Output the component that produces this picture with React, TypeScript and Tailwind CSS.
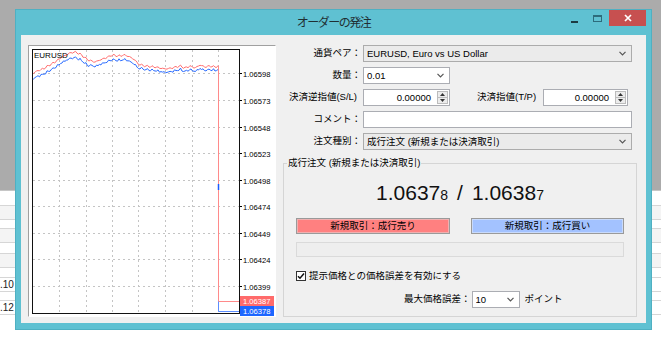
import React from "react";

// chart box inner origin, in page pixels
const OX = 29;
const OY = 46;

const ASK_KEYS: [number, number][] = [
  [32, 74], [37, 71], [43, 69], [48, 66], [55, 62], [62, 57], [70, 53], [75, 52],
  [80, 54], [88, 60], [95, 62], [100, 60], [108, 57], [112, 55], [118, 56], [125, 55],
  [130, 57], [135, 60], [138, 64], [145, 66], [155, 67], [165, 69], [172, 68], [180, 66],
  [185, 68], [190, 66], [195, 68], [200, 65], [205, 67], [210, 66], [215, 67], [218, 66],
];

function lerp(keys: [number, number][], x: number) {
  for (let i = 1; i < keys.length; i++) {
    if (x <= keys[i][0]) {
      const [x0, y0] = keys[i - 1];
      const [x1, y1] = keys[i];
      return y0 + ((y1 - y0) * (x - x0)) / (x1 - x0);
    }
  }
  return keys[keys.length - 1][1];
}

const askPts: string[] = [];
const bidPts: string[] = [];
for (let i = 0, x = 32; x <= 218; i++, x += 1.5) {
  const wob = Math.sin(i * 1.7) * 0.7 + Math.sin(i * 4.3) * 0.4;
  const a = lerp(ASK_KEYS, x) + wob;
  const spread = x < 90 ? 5.5 : x < 140 ? 4.5 : 3.5;
  const b = a + spread + Math.sin(i * 2.9) * 0.5;
  askPts.push(`${(x - OX).toFixed(1)},${(a - OY).toFixed(1)}`);
  bidPts.push(`${(x - OX).toFixed(1)},${(b - OY).toFixed(1)}`);
}

const GRID_X = [59, 86, 112, 138, 165, 192, 218].map((x) => x - OX + 0.5);
const GRID_Y = [73, 100, 127, 153, 180, 206, 233, 259, 286].map((y) => y - OY + 0.5);
const PRICES = ["1.06598", "1.06573", "1.06548", "1.06523", "1.06498", "1.06474", "1.06449", "1.06424", "1.06399"];

function Chart() {
  return (
    <div className="h-[272px] w-[248px] shrink-0 border border-t-[#a0a0a0] border-l-[#a0a0a0] border-r-white border-b-white bg-white">
      <svg width={246} height={270} className="block">
        {GRID_X.map((x) => (
          <line key={x} x1={x} x2={x} y1={4} y2={267} stroke="#c4c4c4" strokeDasharray="2 3" />
        ))}
        {GRID_Y.map((y, i) => (
          <g key={y}>
            <line x1={4} x2={210} y1={y} y2={y} stroke="#c4c4c4" strokeDasharray="2 3" />
            <line x1={210} x2={213} y1={y} y2={y} stroke="#000" />
            <text x={214} y={y + 3} fontSize={7.6} fill="#000" fontFamily="Liberation Sans, sans-serif">
              {PRICES[i]}
            </text>
          </g>
        ))}
        <polyline points={askPts.join(" ")} fill="none" stroke="#ff6f6f" strokeWidth={1} />
        <polyline points={bidPts.join(" ")} fill="none" stroke="#2a6cff" strokeWidth={1} />
        <path d="M189.5 20 V255.5 H210" fill="none" stroke="#ff8a8a" />
        <path d="M189.5 255.5 V265.5 H210" fill="none" stroke="#5b8dff" />
        <path d="M189.5 138 V144" stroke="#1a5cff" strokeWidth={1.5} />
        <rect x={3.5} y={3.5} width={207} height={264} fill="none" stroke="#111" />
        <text x={5} y={12} fontSize={8} fill="#000" fontFamily="Liberation Sans, sans-serif">
          EURUSD
        </text>
        <rect x={211} y={250} width={34} height={10} fill="#ff6b6b" />
        <text x={214} y={258} fontSize={7.6} fill="#fff" fontFamily="Liberation Sans, sans-serif">
          1.06387
        </text>
        <rect x={211} y={260} width={34} height={10} fill="#1d66ff" />
        <text x={214} y={268} fontSize={7.6} fill="#fff" fontFamily="Liberation Sans, sans-serif">
          1.06378
        </text>
      </svg>
    </div>
  );
}

function Chevron() {
  return (
    <svg width="7" height="5" viewBox="0 0 7 5" className="shrink-0">
      <path d="M0.5 0.8 L3.5 3.8 L6.5 0.8" fill="none" stroke="#555" strokeWidth="1.2" />
    </svg>
  );
}

function Tri({ up }: { up?: boolean }) {
  return (
    <svg width="5" height="3" viewBox="0 0 5 3">
      <path d={up ? "M0 3 L2.5 0 L5 3 Z" : "M0 0 L2.5 3 L5 0 Z"} fill="#333" />
    </svg>
  );
}

function Combo({ value, className, gray }: { value: string; className: string; gray?: boolean }) {
  return (
    <div
      className={`flex h-[17px] items-center border pl-[3px] pr-[5px] ${
        gray ? "border-[#acacac] bg-[#ebebeb]" : "border-[#abadb3] bg-white"
      } ${className}`}
    >
      <span className="flex-1 truncate leading-[15px]">{value}</span>
      <Chevron />
    </div>
  );
}

function Spin({ className }: { className: string }) {
  return (
    <div className={`flex h-[17px] border border-[#abadb3] bg-white ${className}`}>
      <span className="flex-1 pr-[6px] text-right leading-[15px]">0.00000</span>
      <div className="my-[1px] mr-[1px] flex w-[11px] flex-col border border-[#bcbcbc] bg-[#ececec]">
        <div className="flex flex-1 items-center justify-center border-b border-[#bcbcbc]">
          <Tri up />
        </div>
        <div className="flex flex-1 items-center justify-center">
          <Tri />
        </div>
      </div>
    </div>
  );
}

function Row({ label, children, labelClass = "" }: { label: string; children: React.ReactNode; labelClass?: string }) {
  return (
    <div className="flex h-[17px] items-center">
      <span className={`w-[78px] shrink-0 whitespace-nowrap text-right ${labelClass}`}>{label}</span>
      <div className="ml-[2px] flex items-center">{children}</div>
    </div>
  );
}

function OrderPanel() {
  return (
    <div className="flex w-[354px] flex-col">
      <div className="flex flex-col gap-[5px]">
        <Row label="通貨ペア：">
          <Combo gray className="w-[269px]" value="EURUSD, Euro vs US Dollar" />
        </Row>
        <Row label="数量：">
          <Combo className="w-[87px]" value="0.01" />
        </Row>
        <Row label="決済逆指値(S/L)" labelClass="pr-[4px]">
          <Spin className="w-[87px]" />
          <span className="ml-[27px] w-[60px] whitespace-nowrap">決済指値(T/P)</span>
          <Spin className="ml-[6px] w-[85px]" />
        </Row>
        <Row label="コメント：">
          <div className="h-[17px] w-[269px] border border-[#abadb3] bg-white" />
        </Row>
        <Row label="注文種別：">
          <Combo gray className="w-[269px]" value="成行注文 (新規または決済取引)" />
        </Row>
      </div>

      <fieldset className="mt-[7px] h-[160px] border border-[#d5d5d5] p-0">
        <legend className="ml-[3px] px-[1px] leading-[12px]">成行注文 (新規または決済取引)</legend>
        <div className="px-[12px]">
          <div className="mt-[12px] flex h-[24px] items-baseline justify-center font-['Liberation_Sans',sans-serif] leading-[24px] text-[#111]">
            <span className="text-[21px]">1.0637</span>
            <span className="text-[14px]">8</span>
            <span className="mx-[9px] text-[21px]">/</span>
            <span className="text-[21px]">1.0638</span>
            <span className="text-[14px]">7</span>
          </div>

          <div className="mt-[13px] flex justify-between">
            <div className="flex h-[16px] w-[154px] items-center justify-center border border-[#9a9a9a] bg-[#ff8080] shadow-[inset_0_0_0_1px_#f0b0b0]">
              新規取引：成行売り
            </div>
            <div className="flex h-[16px] w-[153px] items-center justify-center border border-[#9a9a9a] bg-[#a3c2ff] shadow-[inset_0_0_0_1px_#c8dafc]">
              新規取引：成行買い
            </div>
          </div>

          <div className="mt-[8px] h-[15px] border border-[#dadada] bg-[#eeeeee]" />

          <div className="mt-[12px] flex h-[14px] items-center">
            <div className="flex h-[10px] w-[10px] items-center justify-center border border-[#333] bg-white">
              <svg width="8" height="8" viewBox="0 0 8 8">
                <path d="M1 4.2 L3 6.2 L7 1.5" fill="none" stroke="#111" strokeWidth="1.5" />
              </svg>
            </div>
            <span className="ml-[3px]">提示価格との価格誤差を有効にする</span>
          </div>

          <div className="mt-[8px] flex h-[17px] items-center pl-[108px]">
            <span className="whitespace-nowrap">最大価格誤差：</span>
            <Combo className="ml-[1px] w-[48px]" value="10" />
            <span className="ml-[5px] whitespace-nowrap">ポイント</span>
          </div>
        </div>
      </fieldset>
    </div>
  );
}

function TitleBar() {
  return (
    <div className="relative h-[25px] shrink-0">
      <div className="pt-[5px] text-center text-[12px] leading-[16px] tracking-[-1.5px] text-[#1f2f33]">
        オーダーの発注
      </div>
      <div className="absolute right-[5px] top-0 flex items-start">
        <div className="mr-[15px] mt-[11px] h-[2px] w-[7px] bg-[#1c3a42]" />
        <div className="mr-[7px] mt-[5px] h-[7px] w-[9px] border border-t-2 border-[#2d6c7c]" />
        <div className="flex h-[16px] w-[37px] items-center justify-center bg-[#c75050]">
          <svg width="8" height="8" viewBox="0 0 8 8">
            <path d="M1 1 L7 7 M7 1 L1 7" stroke="#fff" strokeWidth="1.7" />
          </svg>
        </div>
      </div>
    </div>
  );
}

function Backdrop() {
  return (
    <div className="flex flex-col">
      <div className="h-[190px] bg-[#ababab]" />
      <div className="border-t border-[#c6c6c6] pt-[14px]">
        <div className="h-[15px] border-y border-[#d6d6d6] bg-[#f4f4f4]" />
        <div className="mt-[8px] h-[15px] border-y border-[#d6d6d6] bg-[#f4f4f4]" />
        <div className="mt-[10px] h-[15px] border-y border-[#d6d6d6] bg-[#f4f4f4]" />
        <div className="mt-[9px] flex h-[15px] border-y border-[#d6d6d6] bg-white">
          <span className="w-[13px] text-right text-[10px] leading-[13px] text-[#222]">.10</span>
        </div>
        <div className="mt-[8px] flex h-[15px] border-y border-[#d6d6d6] bg-white">
          <span className="w-[13px] text-right text-[10px] leading-[13px] text-[#222]">.12</span>
        </div>
      </div>
    </div>
  );
}

export default function App() {
  return (
    <div className="relative h-[347px] w-[661px] overflow-hidden bg-white font-['Liberation_Sans','Noto_Sans_CJK_JP',sans-serif] text-[9.5px] text-black">
      <Backdrop />
      <div className="absolute left-[15px] top-[9px] flex h-[321px] w-[637px] flex-col border border-[#4fb0c2] bg-[#5fc1d2]">
        <TitleBar />
        <div className="mx-[5px] flex h-[288px] gap-[7px] bg-[#f0f0f0] pl-[7px] pt-[10px]">
          <Chart />
          <OrderPanel />
        </div>
      </div>
    </div>
  );
}
